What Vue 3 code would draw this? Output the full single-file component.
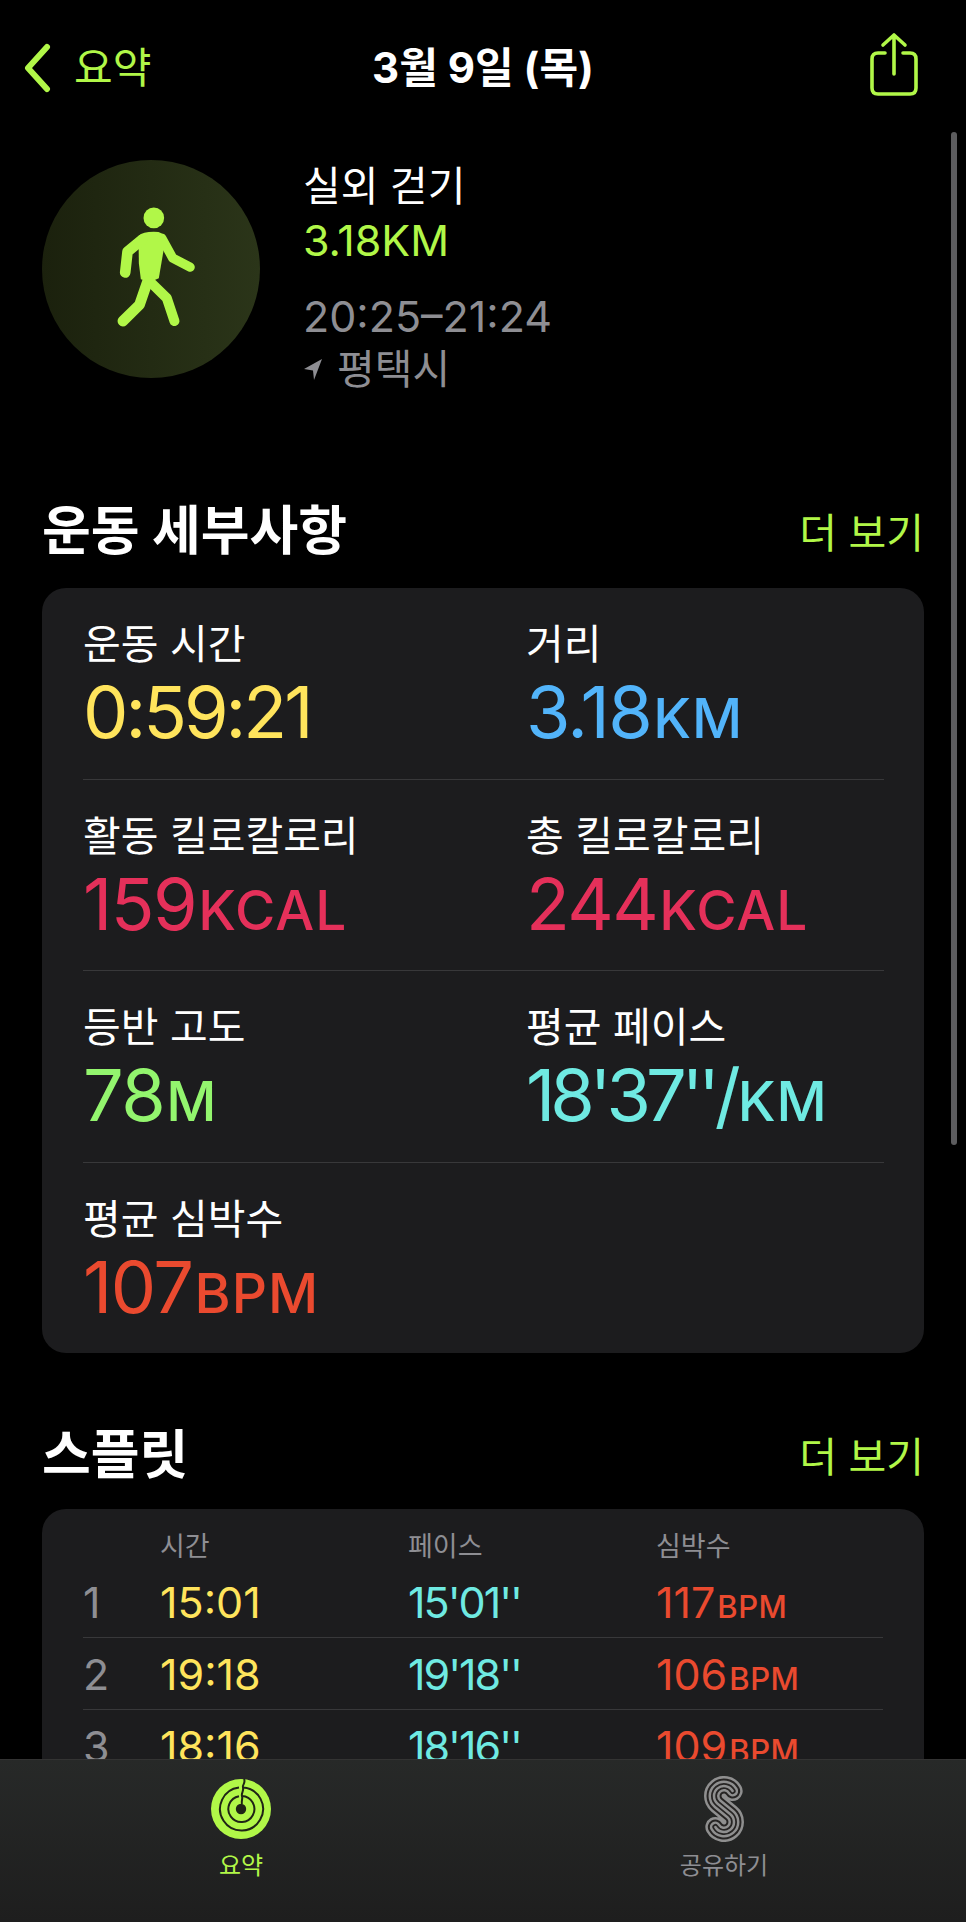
<template>
  <div class="screen">
    <header class="topbar">
      <div class="back">
        <svg class="chevron" viewBox="0 0 30 50" width="30" height="50"><path d="M25 4 L6 25 L25 46" /></svg>
        <span>요약</span>
      </div>
      <div class="topbar-title">3월 9일 (목)</div>
      <svg class="share" viewBox="0 0 48 64" width="48" height="64">
        <path d="M15 21 H8 Q2 21 2 27 V56 Q2 62 8 62 H40 Q46 62 46 56 V27 Q46 21 40 21 H33" />
        <path d="M24 42 V3 M13 13 L24 3 L35 13" />
      </svg>
    </header>

    <section class="hero">
      <div class="hero-icon">
        <svg viewBox="35 30 655 655" width="218" height="218">
          <circle cx="371" cy="204" r="31" class="fig-fill" />
          <path class="fig-fill" d="M325 258 Q340 243 385 246 Q400 250 406 268 L386 385 Q360 400 332 388 L326 340 Z" />
          <path class="fig-line w32" d="M335 270 L292 305 L285 368" />
          <path class="fig-line w28" d="M395 265 L428 325 L480 352" />
          <path class="fig-line w32" d="M352 395 L328 465 L278 514" />
          <path class="fig-line w30" d="M362 398 L410 445 L433 514" />
        </svg>
      </div>
      <div class="hero-text">
        <div class="hero-name">실외 걷기</div>
        <div class="hero-dist">3.18KM</div>
        <div class="hero-time">20:25–21:24</div>
        <div class="hero-place">
          <svg viewBox="0 0 20 22" width="20" height="22"><path d="M19 1 L1 11 L10 12.5 L11 22 Z" /></svg>
          <span>평택시</span>
        </div>
      </div>
    </section>

    <div class="section-head first">
      <h2>운동 세부사항</h2>
      <span class="more">더 보기</span>
    </div>
    <div class="card metrics">
      <div v-for="m in metrics" :key="m.label" class="metric">
        <div class="metric-label">{{ m.label }}</div>
        <div class="metric-value" :class="[m.color, m.fit]">{{ m.value }}<small>{{ m.unit }}</small></div>
      </div>
    </div>

    <div class="section-head second">
      <h2>스플릿</h2>
      <span class="more">더 보기</span>
    </div>
    <div class="card splits">
      <div class="split-row split-head">
        <span></span><span>시간</span><span>페이스</span><span>심박수</span>
      </div>
      <div v-for="s in splits" :key="s.n" class="split-row">
        <span class="num">{{ s.n }}</span>
        <span class="yellow">{{ s.time }}</span>
        <span class="cyan pace">{{ s.pace }}</span>
        <span class="red">{{ s.bpm }}<small>BPM</small></span>
      </div>
    </div>

    <div class="scrollbar"></div>

    <nav class="tabbar">
      <div class="tab active">
        <svg viewBox="-30 -30 60 60" width="60" height="60">
          <circle r="30" fill="#b1f748" />
          <g fill="none" stroke="#1f2416" stroke-width="2">
            <path d="M3 -30 C5 -26 1 -24 2 -21.5 A21.5 21.5 0 1 1 -2 -21.4" />
            <path d="M2 -21.5 C3 -18 0 -16 1 -13 A13 13 0 1 1 -2 -12.8" />
            <path d="M1 -13 C2 -10 0 -8 1 -5" />
          </g>
          <circle r="5.2" fill="#1f2416" />
        </svg>
        <span>요약</span>
      </div>
      <div class="tab">
        <svg viewBox="-20 -33 40 66" width="40" height="66">
          <g fill="none" stroke-linecap="round" stroke-linejoin="round">
            <path v-for="l in sLayers" :key="l.w" :d="sPath" :stroke="l.c" :stroke-width="l.w" />
          </g>
        </svg>
        <span>공유하기</span>
      </div>
    </nav>
  </div>
</template>

<script setup>
const metrics = [
  { label: '운동 시간', value: '0:59:21', unit: '', color: 'yellow', fit: 'clock' },
  { label: '거리', value: '3.18', unit: 'KM', color: 'blue' },
  { label: '활동 킬로칼로리', value: '159', unit: 'KCAL', color: 'pink' },
  { label: '총 킬로칼로리', value: '244', unit: 'KCAL', color: 'pink' },
  { label: '등반 고도', value: '78', unit: 'M', color: 'green' },
  { label: '평균 페이스', value: "18'37''/", unit: 'KM', color: 'cyan', fit: 'pace-big' },
  { label: '평균 심박수', value: '107', unit: 'BPM', color: 'red' }
]

const splits = [
  { n: 1, time: '15:01', pace: "15'01''", bpm: '117' },
  { n: 2, time: '19:18', pace: "19'18''", bpm: '106' },
  { n: 3, time: '18:16', pace: "18'16''", bpm: '109' },
  { n: 4, time: '6:44', pace: "18'40''", bpm: '98' }
]

const sPath = 'M8.66 -18 A10 10 0 1 0 -6.39 -5.3 L6.39 5.3 A10 10 0 1 1 -8.66 18'
const sLayers = [
  { w: 20, c: '#8f8f8f' },
  { w: 15, c: '#262423' },
  { w: 11, c: '#8f8f8f' },
  { w: 6, c: '#262423' },
  { w: 2.5, c: '#8f8f8f' }
]
</script>

<style>
html, body { background: #000; }
</style>

<style scoped>
.screen {
  position: relative;
  width: 966px;
  height: 1922px;
  overflow: hidden;
  background: #000;
  color: #fff;
  font-family: Inter, "Noto Sans CJK KR", sans-serif;
}

.topbar { position: relative; display: flex; align-items: center; justify-content: space-between; height: 128px; padding: 0 0 0 22px; box-sizing: border-box; }
.back { display: flex; align-items: center; gap: 22px; color: #b1f748; font-size: 42px; }
.chevron { margin-top: 8px; }
.chevron path { fill: none; stroke: #b1f748; stroke-width: 6; stroke-linecap: round; stroke-linejoin: round; }
.topbar-title { position: absolute; left: 0; right: 0; text-align: center; font-size: 42px; font-weight: 700; pointer-events: none; }
.share { margin-right: 48px; }
.share path { fill: none; stroke: #b1f748; stroke-width: 3.6; stroke-linecap: round; stroke-linejoin: round; }

.hero { display: flex; gap: 43px; padding: 32px 0 0 42px; }
.hero-icon { width: 218px; height: 218px; border-radius: 50%; background: linear-gradient(90deg, #1b210d, #2b3519); flex: none; }
.hero-icon svg { display: block; }
.fig-fill { fill: #b1f748; }
.fig-line { fill: none; stroke: #b1f748; stroke-linecap: round; stroke-linejoin: round; }
.w32 { stroke-width: 32; }
.w30 { stroke-width: 30; }
.w28 { stroke-width: 28; }

.hero-text { display: flex; flex-direction: column; font-size: 41px; }
.hero-name { line-height: 53px; }
.hero-dist { line-height: 54px; color: #b1f748; font-size: 43px; }
.hero-time { line-height: 54px; margin-top: 22px; color: #8e8e93; font-size: 43px; }
.hero-place { line-height: 52px; color: #8e8e93; display: flex; align-items: center; gap: 14px; }
.hero-place svg path { fill: #8e8e93; }

.section-head { display: flex; align-items: center; justify-content: space-between; padding: 0 42px; }
.section-head.first { margin-top: 98px; height: 68px; }
.section-head.second { margin-top: 64px; height: 68px; }
.section-head h2 { margin: 0; font-size: 53px; font-weight: 700; }
.more { color: #b1f748; font-size: 41px; padding-top: 5px; }

.card { margin: 0 42px; background: #1c1c1e; border-radius: 24px; padding: 0 41px; }

.metrics { margin-top: 27px; display: grid; grid-template-columns: 443px 1fr; height: 765px; box-sizing: border-box; grid-auto-rows: 191.5px; }
.metric { position: relative; padding-top: 30px; box-sizing: border-box; border-bottom: 1px solid #38383a; }
.metric:nth-child(n + 7) { border-bottom: none; }
.metric:nth-child(n + 7)::after { display: none; }
.metric:nth-child(odd):not(:last-child)::after { content: ''; position: absolute; left: 100%; right: -358px; bottom: -1px; height: 1px; background: #38383a; }
.metric:nth-child(even) { border-bottom: none; }
.metric-label { font-size: 41px; line-height: 52px; }
.metric-value { font-size: 72px; line-height: 84px; letter-spacing: -1.5px; }
.metric-value.clock { letter-spacing: -3px; }
.metric-value.pace-big { letter-spacing: -5px; }
.metric-value small { font-size: 55px; font-weight: 500; letter-spacing: 1px; margin-left: 2px; }

.yellow { color: #ffe45c; }
.blue { color: #52b4fa; }
.pink { color: #e5305a; }
.green { color: #93f56e; }
.cyan { color: #6feae2; }
.red { color: #ea4a2f; }

.splits { margin-top: 24px; padding-top: 16px; height: 400px; box-sizing: border-box; }
.split-row { display: grid; grid-template-columns: 77px 248px 248px 1fr; align-items: center; height: 72px; font-size: 43px; border-bottom: 1px solid #38383a; box-sizing: border-box; }
.split-row .pace { letter-spacing: -2px; }
.split-row small { font-size: 31px; font-weight: 500; letter-spacing: .5px; margin-left: 2px; }
.split-head { height: 36px; font-size: 27px; color: #8e8e93; border-bottom: none; margin-bottom: 5px; }
.num { color: #8e8e93; }

.scrollbar { position: absolute; right: 9px; top: 132px; width: 6px; height: 1013px; border-radius: 3px; background: #5c5c5e; }

.tabbar { position: absolute; left: 0; right: 0; bottom: 0; height: 163px; display: grid; grid-template-columns: 482px 1fr; background: linear-gradient(180deg, #272928 0%, #1e1e1e 100%); border-top: 1px solid #333; box-sizing: border-box; }
.tab { display: flex; flex-direction: column; align-items: center; color: #8e8e93; font-size: 24px; }
.tab svg { margin-top: 16px; height: 66px; }
.tab span { margin-top: 8px; line-height: 32px; }
.tab.active { color: #b1f748; }
</style>
